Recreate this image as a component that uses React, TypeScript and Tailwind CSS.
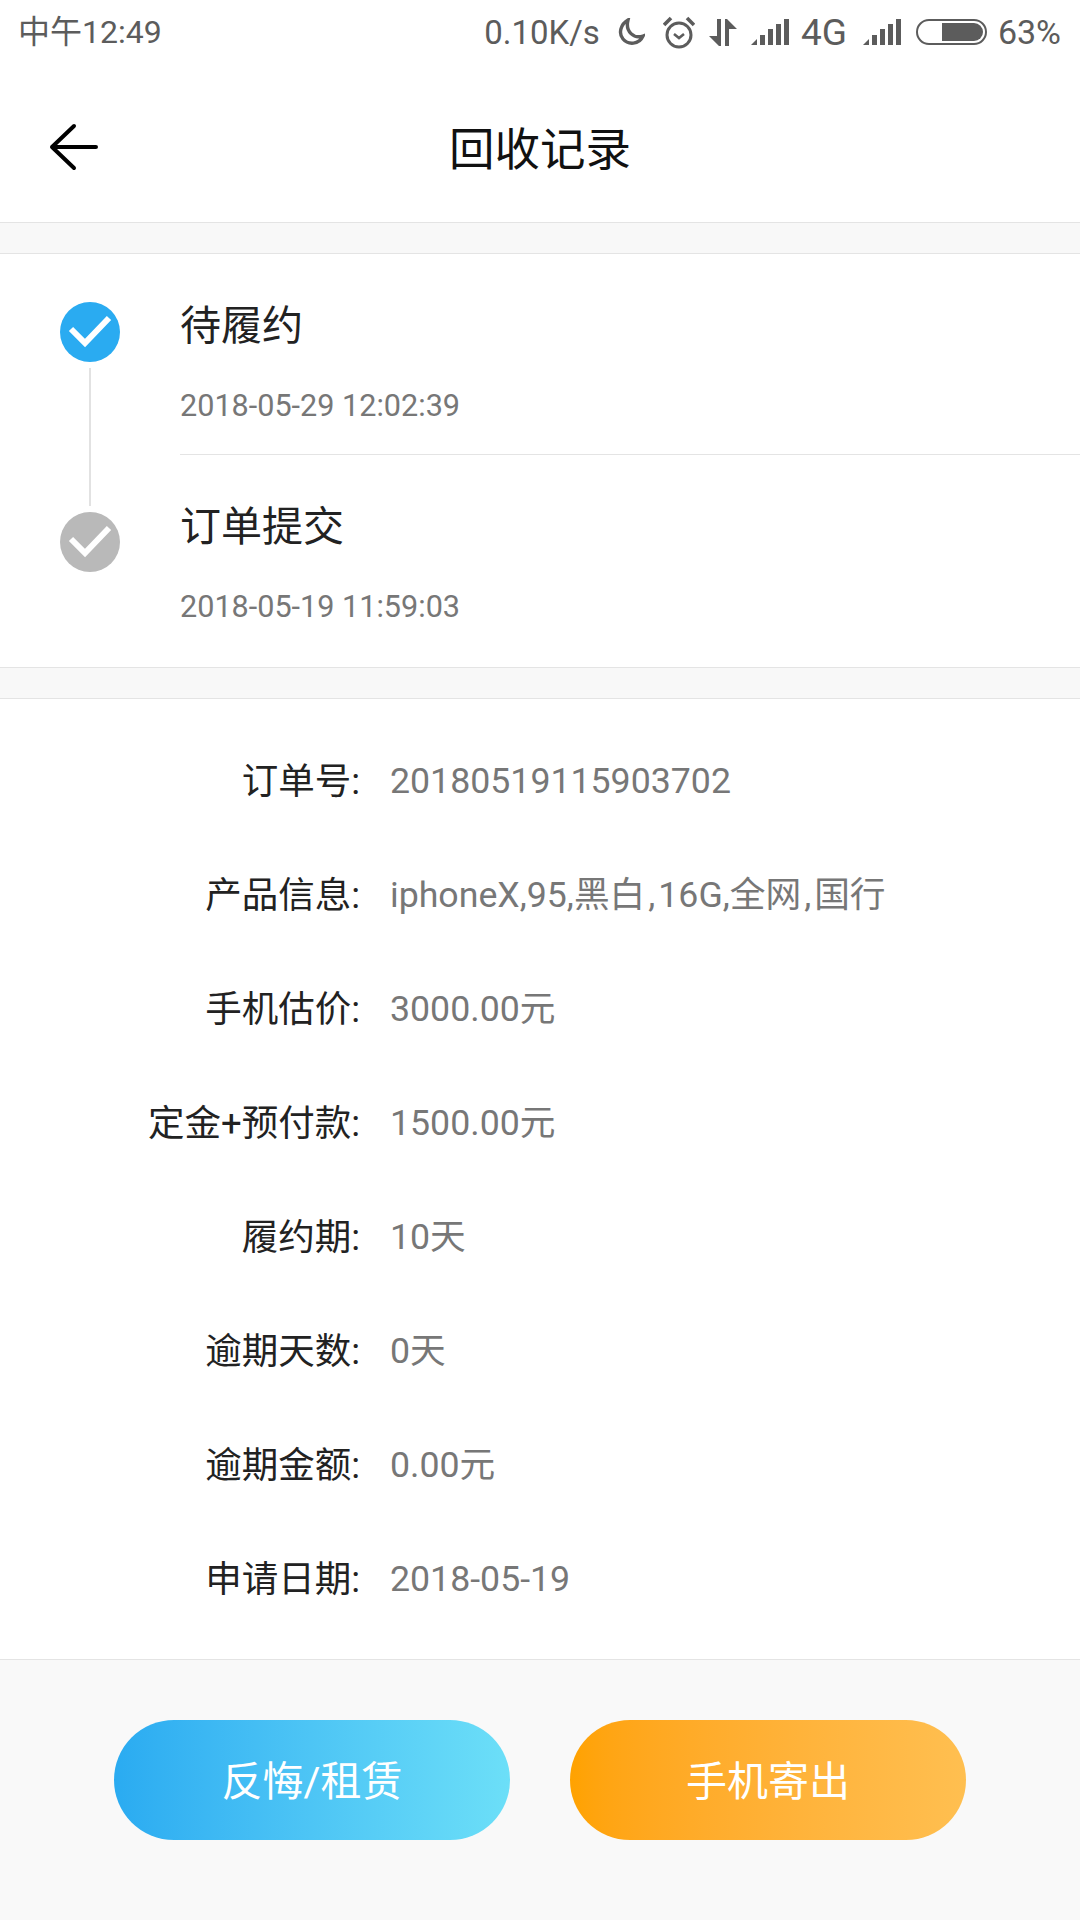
import type { ReactNode } from 'react'

const rows: { label: string; value: ReactNode }[] = [
  { label: '订单号:', value: '20180519115903702' },
  {
    label: '产品信息:',
    value: (
      <>
        iphoneX,95,黑白<span className="px-[3px]">,</span>16G,全网<span className="px-[3px]">,</span>国行
      </>
    ),
  },
  { label: '手机估价:', value: '3000.00元' },
  { label: '定金+预付款:', value: '1500.00元' },
  { label: '履约期:', value: '10天' },
  { label: '逾期天数:', value: '0天' },
  { label: '逾期金额:', value: '0.00元' },
  { label: '申请日期:', value: '2018-05-19' },
]

function Signal() {
  return (
    <svg width="38" height="26" viewBox="0 0 38 26" fill="#5c5c5c">
      <path d="M0 26 L6 20 V26 Z" />
      <rect x="9" y="16" width="5" height="10" />
      <rect x="17" y="10" width="5" height="16" />
      <rect x="25" y="5" width="5" height="21" />
      <rect x="33" y="0" width="5" height="26" />
    </svg>
  )
}

function StatusBar() {
  return (
    <div className="h-[64px] pl-[18px] pr-[19px] flex items-center justify-between text-[#5c5c5c] text-[32px] leading-none">
      <span>中午12:49</span>
      <div className="flex items-center">
        <span className="text-[33px]">0.10K/s</span>
        <svg className="ml-[17px]" width="28" height="28" viewBox="0 0 28 28" fill="none" stroke="#5c5c5c" strokeWidth="3.4">
          <path d="M11 2 C4 6 1 15 6 21 C11 27 22 27 26 18 C17 21 8 14 11 2 Z" />
        </svg>
        <svg className="ml-[18px]" width="32" height="33" viewBox="0 0 32 33" fill="none" stroke="#5c5c5c" strokeWidth="3">
          <circle cx="16" cy="19" r="12" />
          <path d="M11 18 L16 22 L21 18" strokeWidth="2.6" />
          <path d="M1 9 L8 2 M31 9 L24 2" strokeWidth="3.6" />
        </svg>
        <svg className="ml-[14px]" width="28" height="27" viewBox="0 0 28 27" fill="#5c5c5c">
          <path d="M8 0 H12 V27 H10 L0 17 H8 Z" />
          <path d="M16 0 H18 L28 10 H20 V27 H16 Z" />
        </svg>
        <div className="ml-[14px]"><Signal /></div>
        <span className="ml-[12px] text-[37px]">4G</span>
        <div className="ml-[16px]"><Signal /></div>
        <svg className="ml-[15px]" width="71" height="26" viewBox="0 0 71 26" fill="none">
          <rect x="1" y="1" width="69" height="24" rx="12" stroke="#5c5c5c" strokeWidth="2" />
          <path d="M26 4 H58 A9 9 0 0 1 58 22 H26 Z" fill="#5c5c5c" />
        </svg>
        <span className="ml-[11px] text-[34px]">63%</span>
      </div>
    </div>
  )
}

function StepIcon({ color }: { color: string }) {
  return (
    <svg width="60" height="60" viewBox="0 0 60 60" className="shrink-0">
      <circle cx="30" cy="30" r="30" fill={color} />
      <path d="M11 27 L25 41 L49 16" fill="none" stroke="#fff" strokeWidth="6" />
    </svg>
  )
}

export default function App() {
  return (
    <div className="w-[1080px] h-[1920px] bg-white flex flex-col overflow-hidden font-['Roboto','Noto_Sans_CJK_SC',sans-serif]">
      <StatusBar />

      {/* Header */}
      <div className="relative h-[159px] pt-[16px] flex items-center justify-center border-b border-[#e4e4e4]">
        <svg className="absolute left-[49px] top-[59px]" width="52" height="48" viewBox="0 0 52 48" fill="none" stroke="#000" strokeWidth="4" strokeLinecap="round" strokeLinejoin="round">
          <path d="M3 24 H47 M25 3 L3 24 L25 45" />
        </svg>
        <h1 className="text-[45.5px] text-[#111] font-normal leading-none">回收记录</h1>
      </div>
      <div className="h-[30px] bg-[#f8f8f8] border-b border-[#e4e4e4] box-content" />

      {/* Timeline */}
      <div className="flex border-b border-[#e4e4e4]">
        <div className="w-[180px] shrink-0 pl-[60px] pt-[48px]">
          <div className="w-[60px] flex flex-col items-center">
            <StepIcon color="#2aabf1" />
            <div className="w-[2px] h-[138px] my-[6px] bg-[#e2e2e2]" />
            <StepIcon color="#b9b9b9" />
          </div>
        </div>
        <div className="flex-1">
          <div className="pt-[50px] pb-[30px] border-b border-[#e4e4e4]">
            <div className="text-[41px] leading-[44px] text-[#222]">待履约</div>
            <div className="mt-[40px] text-[30.6px] leading-[36px] text-[#777]">2018-05-29 12:02:39</div>
          </div>
          <div className="pt-[50px] pb-[42px]">
            <div className="text-[41px] leading-[44px] text-[#222]">订单提交</div>
            <div className="mt-[40px] text-[30.6px] leading-[36px] text-[#777]">2018-05-19 11:59:03</div>
          </div>
        </div>
      </div>
      <div className="h-[30px] bg-[#f8f8f8] border-b border-[#e4e4e4] box-content" />

      {/* Order details */}
      <div className="pt-[26px] pb-[22px]">
        {rows.map((row) => (
          <div key={row.label} className="h-[114px] flex items-center">
            <div className="w-[360px] text-right text-[36.5px] text-[#222]">{row.label}</div>
            <div className="ml-[30px] text-[35.7px] text-[#777]">{row.value}</div>
          </div>
        ))}
      </div>

      {/* Bottom buttons */}
      <div className="flex-1 bg-[#f9f9f9] border-t border-[#e4e4e4] pt-[60px] pl-[114px] flex gap-[60px]">
        <button className="w-[396px] h-[120px] pt-[5px] rounded-full bg-gradient-to-r from-[#2aabf1] to-[#6cdff8] text-white text-[41px]">反悔/租赁</button>
        <button className="w-[396px] h-[120px] pt-[5px] rounded-full bg-gradient-to-r from-[#ffa200] to-[#ffbf50] text-white text-[41px]">手机寄出</button>
      </div>
    </div>
  )
}
